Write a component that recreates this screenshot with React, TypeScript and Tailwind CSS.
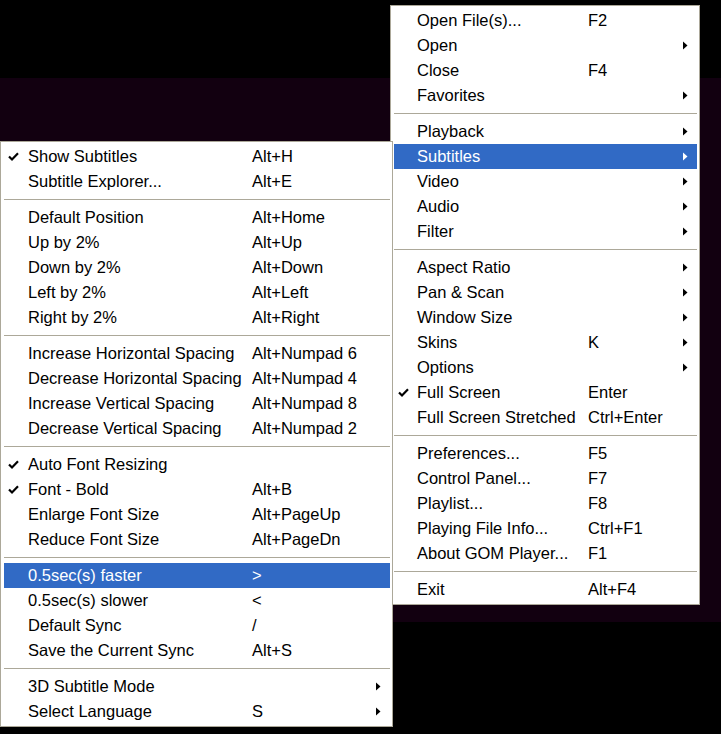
import React from "react";

type Item = {
  label?: string;
  sc?: string;
  sub?: boolean;
  check?: boolean;
  hi?: boolean;
  sep?: boolean;
};

const rightItems: Item[] = [
  { label: "Open File(s)...", sc: "F2" },
  { label: "Open", sub: true },
  { label: "Close", sc: "F4" },
  { label: "Favorites", sub: true },
  { sep: true },
  { label: "Playback", sub: true },
  { label: "Subtitles", sub: true, hi: true },
  { label: "Video", sub: true },
  { label: "Audio", sub: true },
  { label: "Filter", sub: true },
  { sep: true },
  { label: "Aspect Ratio", sub: true },
  { label: "Pan & Scan", sub: true },
  { label: "Window Size", sub: true },
  { label: "Skins", sc: "K", sub: true },
  { label: "Options", sub: true },
  { label: "Full Screen", sc: "Enter", check: true },
  { label: "Full Screen Stretched", sc: "Ctrl+Enter" },
  { sep: true },
  { label: "Preferences...", sc: "F5" },
  { label: "Control Panel...", sc: "F7" },
  { label: "Playlist...", sc: "F8" },
  { label: "Playing File Info...", sc: "Ctrl+F1" },
  { label: "About GOM Player...", sc: "F1" },
  { sep: true },
  { label: "Exit", sc: "Alt+F4" },
];

const leftItems: Item[] = [
  { label: "Show Subtitles", sc: "Alt+H", check: true },
  { label: "Subtitle Explorer...", sc: "Alt+E" },
  { sep: true },
  { label: "Default Position", sc: "Alt+Home" },
  { label: "Up by 2%", sc: "Alt+Up" },
  { label: "Down by 2%", sc: "Alt+Down" },
  { label: "Left by 2%", sc: "Alt+Left" },
  { label: "Right by 2%", sc: "Alt+Right" },
  { sep: true },
  { label: "Increase Horizontal Spacing", sc: "Alt+Numpad 6" },
  { label: "Decrease Horizontal Spacing", sc: "Alt+Numpad 4" },
  { label: "Increase Vertical Spacing", sc: "Alt+Numpad 8" },
  { label: "Decrease Vertical Spacing", sc: "Alt+Numpad 2" },
  { sep: true },
  { label: "Auto Font Resizing", check: true },
  { label: "Font - Bold", sc: "Alt+B", check: true },
  { label: "Enlarge Font Size", sc: "Alt+PageUp" },
  { label: "Reduce Font Size", sc: "Alt+PageDn" },
  { sep: true },
  { label: "0.5sec(s) faster", sc: ">", hi: true },
  { label: "0.5sec(s) slower", sc: "<" },
  { label: "Default Sync", sc: "/" },
  { label: "Save the Current Sync", sc: "Alt+S" },
  { sep: true },
  { label: "3D Subtitle Mode", sub: true },
  { label: "Select Language", sc: "S", sub: true },
];

function Check({ color }: { color: string }) {
  return (
    <svg width="11" height="10" viewBox="0 0 11 10">
      <path d="M1 4.5 L4 7.5 L10 1.2" fill="none" stroke={color} strokeWidth="2.2" />
    </svg>
  );
}

function Arrow({ color }: { color: string }) {
  return (
    <svg width="5" height="9" viewBox="0 0 5 9">
      <polygon points="0,0.5 4.5,4.5 0,8.5" fill={color} />
    </svg>
  );
}

function Menu({
  items,
  labelW,
  checkW,
  className,
}: {
  items: Item[];
  labelW: string;
  checkW: string;
  className: string;
}) {
  return (
    <div
      className={`absolute border border-[#aca899] bg-white pt-[2px] pb-[2px] pl-[3px] pr-[2px] font-['Liberation_Sans',Arial,sans-serif] text-[16.5px] ${className}`}
    >
      {items.map((it, i) =>
        it.sep ? (
          <div key={i} className="flex h-[11px] items-center">
            <div className="h-px w-full bg-[#aca899]" />
          </div>
        ) : (
          <div
            key={i}
            className={`flex h-[25px] items-center leading-[25px] whitespace-nowrap ${
              it.hi ? "bg-[#316ac5] text-white" : "text-black"
            }`}
          >
            <div className={`flex items-center pl-[4px] ${checkW}`}>
              {it.check && <Check color={it.hi ? "#fff" : "#000"} />}
            </div>
            <div className={labelW}>{it.label}</div>
            <div className="flex-1">{it.sc}</div>
            <div className="flex w-[14px] items-center">
              {it.sub && <Arrow color={it.hi ? "#fff" : "#000"} />}
            </div>
          </div>
        )
      )}
    </div>
  );
}

export default function App() {
  return (
    <div className="relative h-[734px] w-[721px] overflow-hidden bg-black">
      <div className="mt-[78px] h-[544px] bg-[#120010]" />
      <Menu
        items={rightItems}
        labelW="w-[171px]"
        checkW="w-[23px]"
        className="left-[390px] top-[5px] w-[310px]"
      />
      <Menu
        items={leftItems}
        labelW="w-[224px]"
        checkW="w-[24px]"
        className="left-0 top-[141px] w-[393px]"
      />
    </div>
  );
}
